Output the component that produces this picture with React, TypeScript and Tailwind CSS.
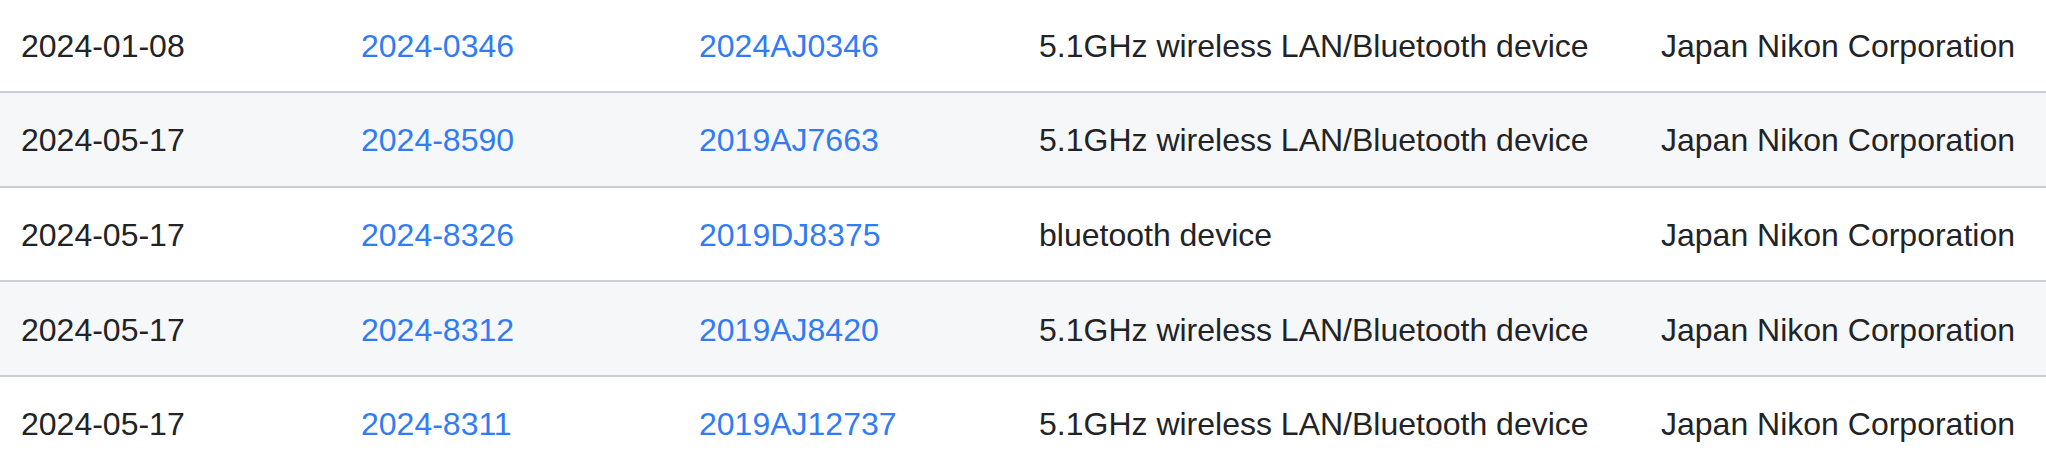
import React from 'react';

interface Row {
  date: string;
  notice: string;
  cert: string;
  device: string;
  maker: string;
}

const ROWS: Row[] = [
  { date: '2024-01-08', notice: '2024-0346', cert: '2024AJ0346', device: '5.1GHz wireless LAN/Bluetooth device', maker: 'Japan Nikon Corporation' },
  { date: '2024-05-17', notice: '2024-8590', cert: '2019AJ7663', device: '5.1GHz wireless LAN/Bluetooth device', maker: 'Japan Nikon Corporation' },
  { date: '2024-05-17', notice: '2024-8326', cert: '2019DJ8375', device: 'bluetooth device', maker: 'Japan Nikon Corporation' },
  { date: '2024-05-17', notice: '2024-8312', cert: '2019AJ8420', device: '5.1GHz wireless LAN/Bluetooth device', maker: 'Japan Nikon Corporation' },
  { date: '2024-05-17', notice: '2024-8311', cert: '2019AJ12737', device: '5.1GHz wireless LAN/Bluetooth device', maker: 'Japan Nikon Corporation' },
];

export default function App() {
  return (
    <div
      className="w-[2046px] h-[464px] overflow-hidden bg-white text-[32px] leading-[36px] text-[#222326]"
      style={{ fontFamily: '"Liberation Sans", Arial, sans-serif' }}
    >
      <div className="-mt-[1.7px]">
        {ROWS.map((r, i) => (
          <div
            key={i}
            className={`grid grid-cols-[340px_338px_340px_622px_1fr] items-center h-[94.7px] pt-[2px] border-b-2 border-[#cccdd2] ${
              i % 2 === 1 ? 'bg-[#f6f7f9]' : 'bg-white'
            }`}
          >
            <div className="pl-[21px] whitespace-nowrap">{r.date}</div>
            <div className="pl-[21px] whitespace-nowrap">
              <a href="#" className="text-[#317cf5]">{r.notice}</a>
            </div>
            <div className="pl-[21px] whitespace-nowrap">
              <a href="#" className="text-[#317cf5]">{r.cert}</a>
            </div>
            <div className="pl-[21px] whitespace-nowrap">{r.device}</div>
            <div className="pl-[21px] whitespace-nowrap">{r.maker}</div>
          </div>
        ))}
      </div>
    </div>
  );
}
